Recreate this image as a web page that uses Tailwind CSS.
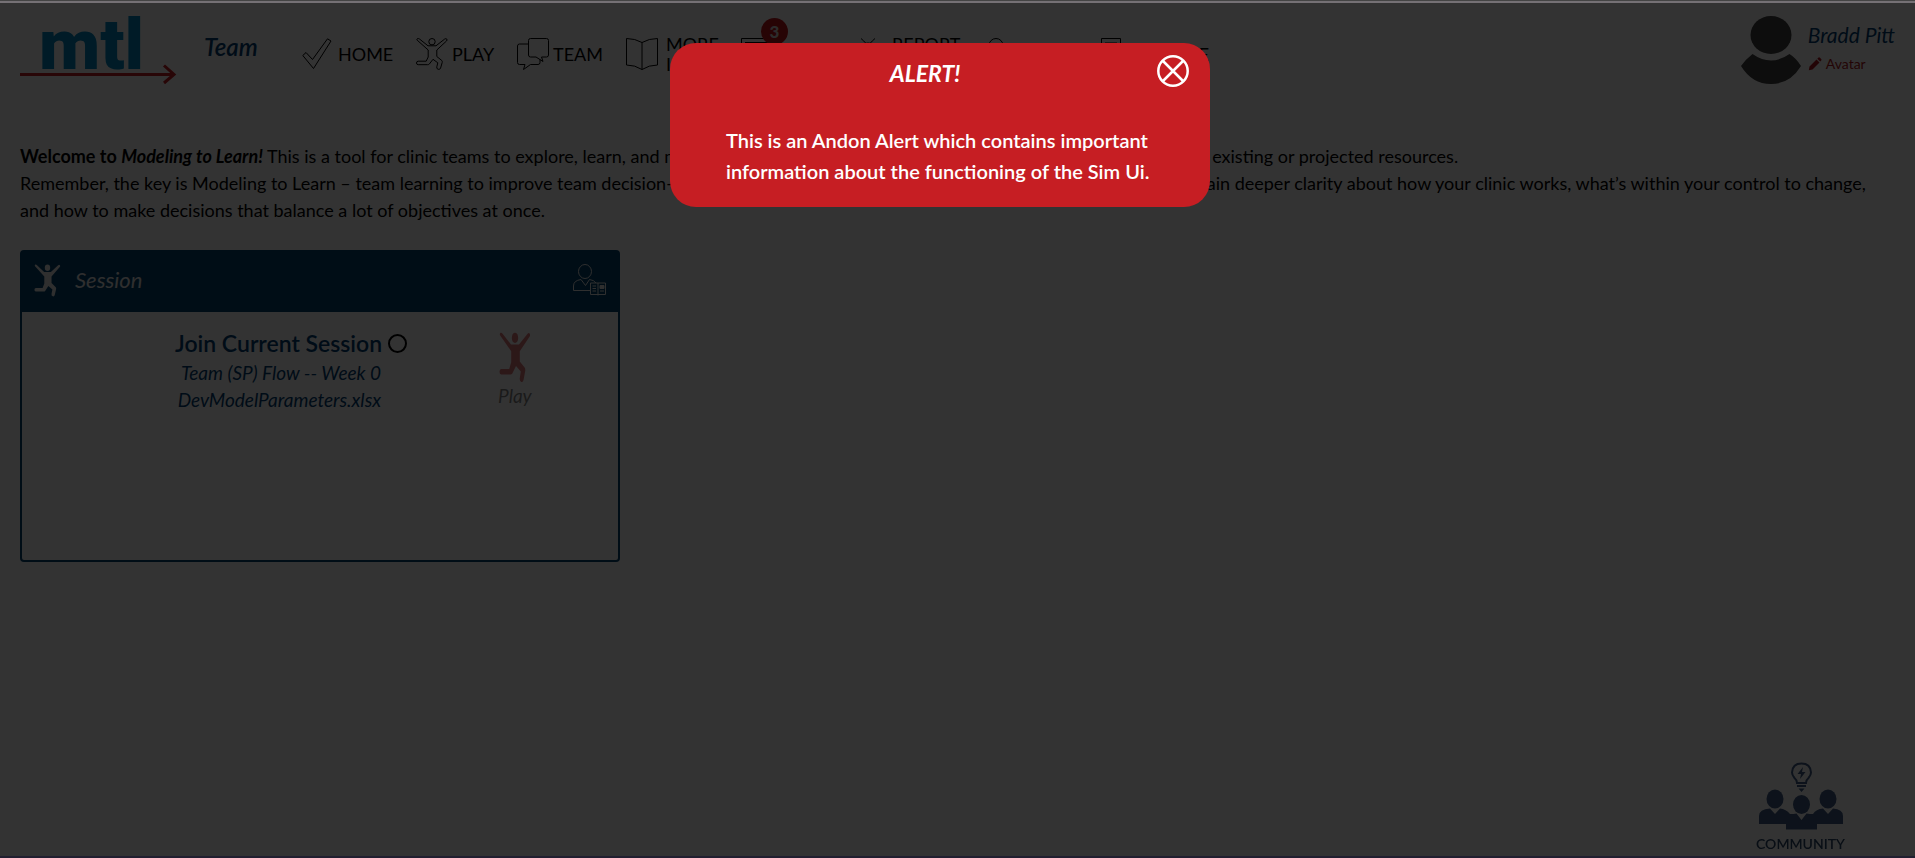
<!DOCTYPE html>
<html lang="en">
<head>
<meta charset="utf-8">
<title>Modeling to Learn</title>
<script src="https://cdn.jsdelivr.net/npm/@tailwindcss/browser@4"></script>
</head>
<body class="min-h-screen bg-white font-['Lato','Open_Sans',sans-serif] text-black">
<svg class="hidden" aria-hidden="true">
  <symbol id="jumper" viewBox="0 0 32 32">
    <circle cx="16" cy="3.700" r="3.200"/>
    <path d="M1.200 2.200Q.300 1 1.600.500Q2.600.200 3.600 1.100L12 7.800H20L28.600 1.100Q29.800.200 30.800 1.100Q31.500 2 30.500 3L20.800 12V18.500L25.800 22.500Q26.500 23.400 26.200 24.500L24.600 30Q24 31.800 22.200 31.300Q20.300 30.800 20.800 28.800L21.800 24.800L17 21.300L13.200 26.200Q12.600 26.700 11.600 26.700H2.200Q.500 26.600.500 25Q.500 23.300 2.200 23.200H10.200L12.200 19V12Z"/>
  </symbol>
</svg>

<header class="flex items-start px-5 pt-4">
  <a href="#" aria-label="mtl" class="block">
    <svg class="h-[72px] w-[160px] overflow-visible" viewBox="0 0 160 72">
      <text x="19" y="53" font-family="Roboto, sans-serif" font-weight="900" font-size="71" fill="#0088c0">mtl</text>
      <path d="M0 58.500H154M144 49.500L154 58.500L144 67" fill="none" stroke="#c61e23" stroke-width="3"/>
    </svg>
  </a>
  <h1 class="ml-6 w-[98px] pt-4 text-[24px] leading-[30px] font-semibold italic text-[#003e73]">Team</h1>
  <nav class="flex pt-[22px] text-[18px] leading-[20px]">
    <a href="#" class="flex h-8 w-[114px] items-center gap-1">
      <svg class="size-8" viewBox="0 0 32 32" fill="none" stroke="currentColor"><path d="M.800 17.500L4 14.500L10.500 21.500L25.500.800L29 3L11.500 30.500Z"/></svg>HOME</a>
    <a href="#" class="flex h-8 w-[101px] items-center gap-1">
      <svg class="size-8" viewBox="0 0 32 32" fill="none" stroke="currentColor"><use href="#jumper"/></svg>PLAY</a>
    <a href="#" class="flex h-8 w-[109px] items-center gap-1">
      <svg class="size-8" viewBox="0 0 32 32" fill="none" stroke="currentColor"><path d="M13.500.500H29.500Q31.500.500 31.500 2.500V17Q31.500 19 29.500 19H24.500L26 23.500L19 19H13.500Q11.500 19 11.500 17V2.500Q11.500.500 13.500.500ZM11.500 6H2.500Q.500 6 .500 8V24.500Q.500 26.500 2.500 26.500H8L6.500 31.500L13.500 26.500H21Q23 26.500 23 24.500V21.500"/></svg>TEAM</a>
    <a href="#" class="flex h-8 w-[115px] items-center gap-2">
      <svg class="size-8" viewBox="0 0 32 32" fill="none" stroke="currentColor"><path d="M.500.500Q9 .500 16 4.500Q23 .500 31.500.500V27Q23 27 16 31.500Q9 27 .500 27ZM16 4.500V31.500"/></svg><span>MORE<br>INFO</span></a>
    <a href="#" class="relative flex h-8 w-[115px] items-center gap-1">
      <svg class="size-8" viewBox="0 0 32 32" fill="none" stroke="currentColor"><path d="M.500.500H31.500V25H.500ZM4 4.500H28M4 9.500H28M4 14.500H20"/></svg>INBOX
      <span class="absolute -top-5 left-5 flex size-[27px] items-center justify-center rounded-full bg-[#c4161c] text-[17px] font-black text-[#ddd]">3</span></a>
    <a href="#" class="flex h-8 w-[128px] items-center gap-1">
      <svg class="size-8" viewBox="0 0 32 32" fill="none" stroke="currentColor"><path d="M5 .500Q8 3 10 5.500M19 .500Q16 3 14 5.500M6 12Q6 5 12 5T18 12V22Q18 28 12 28T6 22ZM12 5V28M1 12H6M18 12H23M1 20H6M18 20H23"/></svg><span>REPORT<br>ISSUE</span></a>
    <a href="#" class="flex h-8 w-[111px] items-center gap-1">
      <svg class="size-8" viewBox="0 0 32 32" fill="none" stroke="currentColor"><circle cx="12" cy="7.500" r="7"/><path d="M.500 31V25Q.500 17.500 8 17.500H16Q23.500 17.500 23.500 25V31Z"/></svg>LOGIN</a>
    <a href="#" class="flex h-8 items-center gap-1">
      <svg class="size-8" viewBox="0 0 32 32" fill="none" stroke="currentColor"><path d="M6.500 31V.500H25.500V31ZM10 5H22M10 10H22"/></svg>MANAGE</a>
  </nav>
  <div class="ml-auto flex items-start gap-1.5">
    <svg class="h-[69px] w-[62px]" viewBox="0 0 62 69" fill="#404040" role="img" aria-label="User avatar"><ellipse cx="31" cy="19" rx="20.500" ry="19"/><path d="M12.500 38Q31 51 49.500 38Q56 42 61 50Q50 68 31 68T1 50Q6 43 12.500 38Z"/></svg>
    <div class="pt-[6px]">
      <div class="text-[21px] leading-[26px] italic text-[#003e73]">Bradd Pitt</div>
      <button type="button" class="mt-1.5 flex items-center gap-1 text-[14px] leading-[20px] text-[#b01820]">
        <svg class="size-[14px]" viewBox="0 0 14 14" fill="currentColor"><path d="M.800 13.200L1.500 9.500L8.500 2.500L11.500 5.500L4.500 12.500ZM9.300 1.700L10.500.600Q11.200 0 12 .800L13.200 2Q13.900 2.800 13.200 3.500L12.200 4.600Z"/></svg>Avatar</button>
    </div>
  </div>
</header>

<main class="px-5 pt-[55px]">
  <p class="text-[18px] leading-[27px]"><b>Welcome to <i>Modeling to Learn!</i></b> This is a tool for clinic teams to explore, learn, and make decisions about how to best meet needs of patients, given your existing or projected resources.<br>
  Remember, the key is Modeling to Learn – team learning to improve team decision-making. Use the simulation to find out what matters the most, and gain deeper clarity about how your clinic works, what’s within your control to change,<br>
  and how to make decisions that balance a lot of objectives at once.</p>

  <section class="mt-[26px] min-h-[312px] w-[600px] rounded border-2 border-[#00416e] text-[#003e73]">
    <header class="flex h-[60px] items-center bg-[#00416e] pr-3 pb-1 pl-3 text-[#e8e8e8]">
      <svg class="h-[33px] w-[27px]" preserveAspectRatio="none" viewBox="0 0 32 32" fill="currentColor"><use href="#jumper"/></svg>
      <h2 class="ml-3.5 text-[22px] leading-[30px] italic">Session</h2>
      <svg class="ml-auto h-8 w-[33px]" viewBox="0 0 33 32" fill="none" stroke="currentColor"><ellipse cx="12" cy="7.500" rx="6.500" ry="7"/><path d="M17 26.500H.500V22Q.500 16.500 8 15.500L12.500 21.500L16.500 15.500Q21 16 23 19M17.500 19H32.500V30.500H17.500ZM25 19V31.500M19.500 22H23M19.500 24.500H23M19.500 27H23M27 27H31"/><path d="M27 21.500H31V24.500H27Z" fill="currentColor"/></svg>
    </header>
    <div class="flex pt-4">
      <div class="ml-[153px] flex flex-col">
        <label for="join" class="flex items-center gap-1.5 text-[23px] leading-[31px] font-semibold">Join Current Session
          <input id="join" type="radio" name="session" class="size-[19px] appearance-none rounded-full border-2 border-black"></label>
        <div class="pr-[26px] text-right text-[19px] leading-[27px] italic">Team (SP) Flow -- Week 0<br>DevModelParameters.xlsx</div>
      </div>
      <button type="button" class="mt-1 ml-[91px] flex flex-col items-center opacity-60">
        <svg class="h-[51px] w-8 text-[#c61e23]" preserveAspectRatio="none" viewBox="0 0 32 32" fill="currentColor"><use href="#jumper"/></svg>
        <span class="text-[19px] leading-[26px] italic text-[#333]">Play</span>
      </button>
    </div>
  </section>
</main>

<a href="#" class="fixed right-[70px] bottom-1 flex flex-col items-center gap-1 text-[#405d86]">
  <svg class="h-[67px] w-[84px] overflow-visible" viewBox="0 0 84 67" fill="currentColor">
    <path d="M38 20Q38 17 35.500 15Q33 12 33 9.500Q33.500 .500 42.500 .500T52 9.500Q52 12 49.500 15Q47 17 47 20Z" fill="none" stroke="currentColor" stroke-width="2"/>
    <path d="M44 4L38.500 11H42L41 16L46.500 9H43ZM38 22H47V24H38ZM39.500 25.500H45.500L42.500 29Z"/>
    <ellipse cx="16" cy="36" rx="8.500" ry="9.500"/><ellipse cx="69" cy="36" rx="8.500" ry="9.500"/><ellipse cx="42.500" cy="41.500" rx="8.500" ry="9.500"/>
    <path d="M0 61V53Q0 46 11 45.500L16 51L21 45.500Q27 46 31 51Q35 51 37.500 50.500L42.500 57L47.500 50.500Q51 51 54 51Q57 46 64 45.500L69 51L74 45.500Q84 46 84 53V61H58V66.500H27V61Z"/>
  </svg>
  <span class="text-[14px] leading-[20px] font-semibold text-[#2b4668]">COMMUNITY</span>
</a>

<div class="fixed inset-0 flex items-start justify-center border-b-2 border-[#211f30] bg-black/80 pt-[43px] pr-[35px]">
  <div role="alertdialog" aria-labelledby="alert-title" aria-describedby="alert-text" class="w-[540px] rounded-[26px] bg-[#c61e23] pt-3 pb-5 text-white">
    <div class="flex items-center pr-[21px] pl-[23px]">
      <h2 id="alert-title" class="flex-1 pt-1 text-center text-[23px] leading-[28px] font-bold italic">ALERT!</h2>
      <button type="button" aria-label="Close alert">
        <svg class="size-8" viewBox="0 0 32 32" fill="none" stroke="currentColor" stroke-width="2.500"><circle cx="16" cy="16" r="14.700"/><path d="M6 6L26 26M26 6L6 26"/></svg>
      </button>
    </div>
    <p id="alert-text" class="mt-[38px] pr-12 pl-14 text-[20px] leading-[31px] font-semibold">This is an Andon Alert which contains important information about the functioning of the Sim Ui.</p>
  </div>
</div>
<div class="fixed inset-x-0 top-0 h-[3px] border-b-2 border-[#757175] bg-[#444]"></div>
</body>
</html>
